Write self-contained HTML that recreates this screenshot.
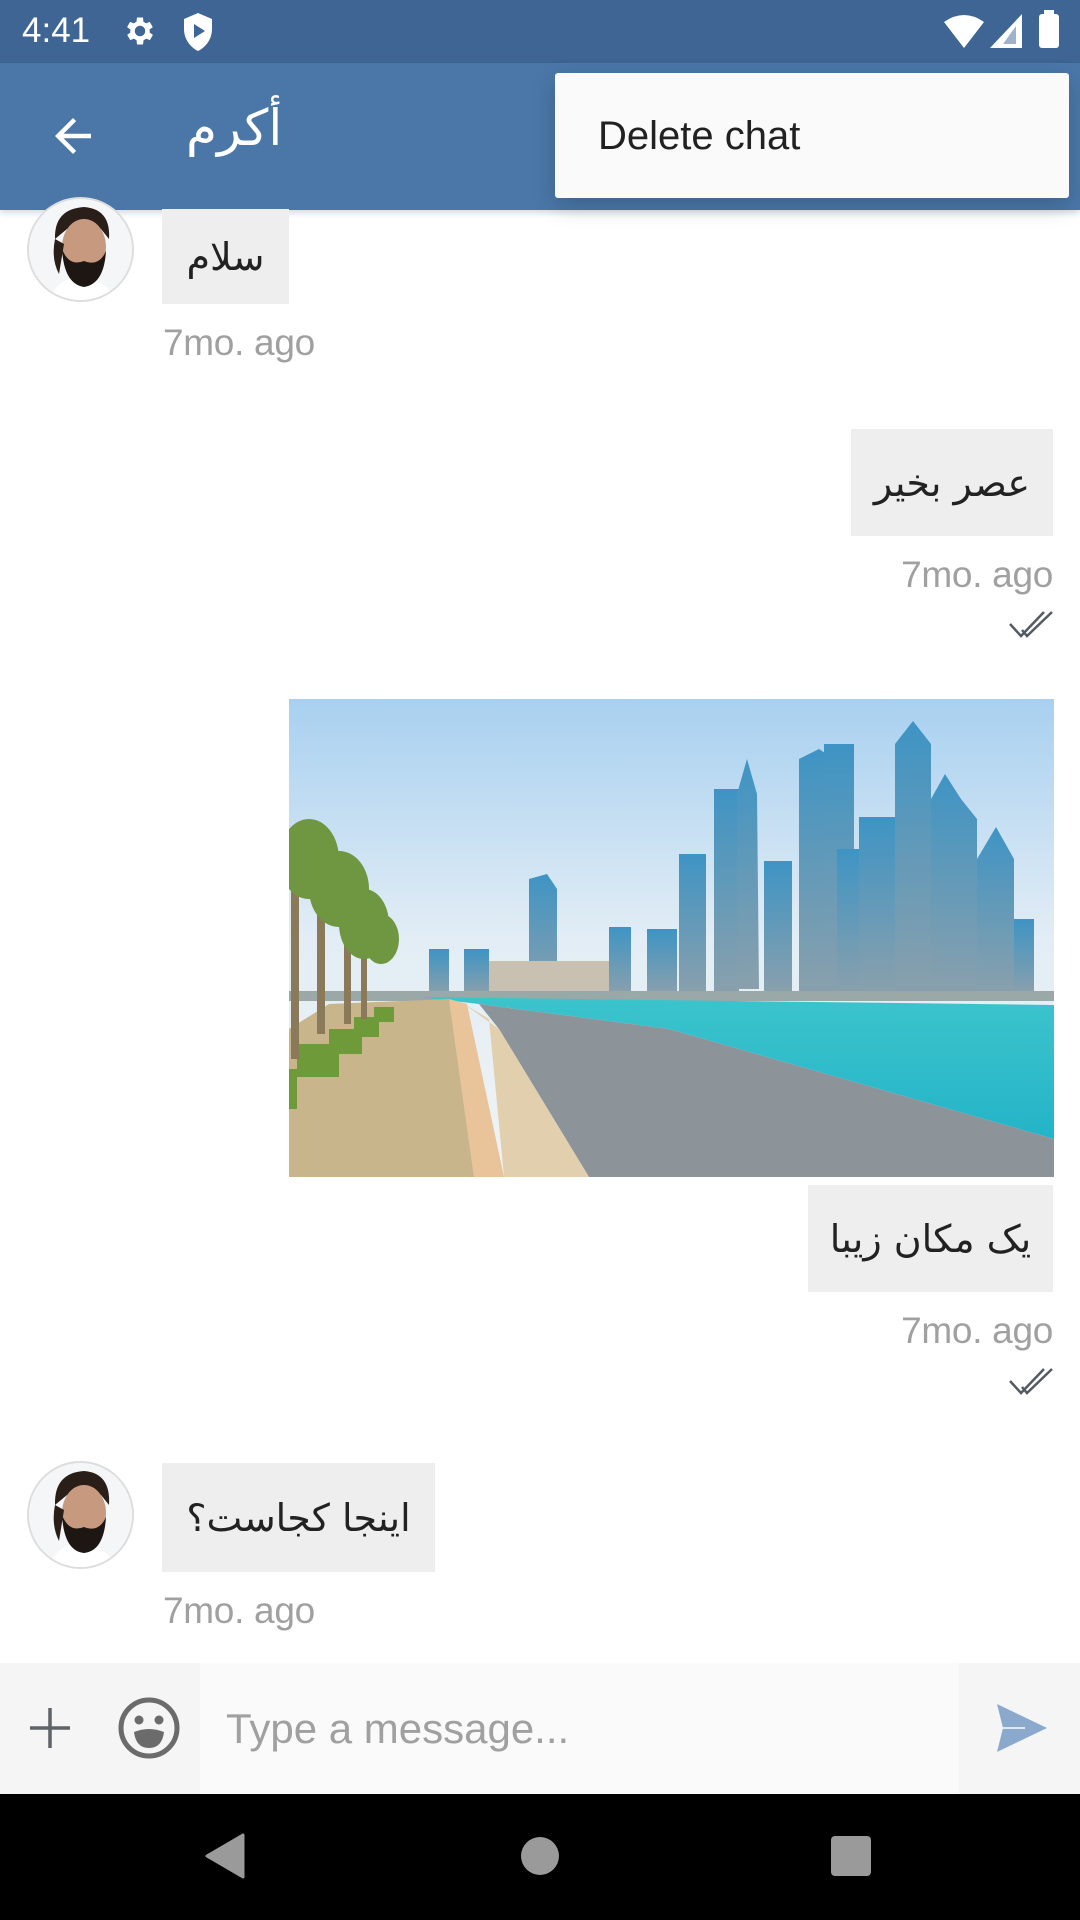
<!DOCTYPE html>
<html><head><meta charset="utf-8"><style>
*{margin:0;padding:0;box-sizing:border-box}
body{width:1080px;height:1920px;position:relative;background:#fff;font-family:"Liberation Sans","Noto Sans CJK SC",sans-serif;overflow:hidden}
.abs{position:absolute}
.bub{position:absolute;background:#eeeeee;color:#222;font-size:38px;display:flex;align-items:center;justify-content:center;font-family:"DejaVu Sans","Noto Sans CJK SC",sans-serif}
.ts{position:absolute;font-size:37px;color:#a0a0a0;font-weight:300;font-family:"Liberation Sans",sans-serif;letter-spacing:-0.3px}
</style></head><body>
<div class="abs" style="left:0;top:0;width:1080px;height:63px;background:#3f6595"></div>
<div class="abs" style="left:22px;top:11px;color:#fff;font-size:35px">4:41</div>
<svg class="abs" style="left:122px;top:13px" width="36" height="36" viewBox="0 0 24 24"><path fill="#fff" d="M19.4 13a7.5 7.5 0 0 0 0-2l2.1-1.6-2-3.5-2.5 1a7 7 0 0 0-1.7-1L15 3h-4l-.4 2.9a7 7 0 0 0-1.7 1l-2.5-1-2 3.5L6.6 11a7.5 7.5 0 0 0 0 2l-2.1 1.6 2 3.5 2.5-1a7 7 0 0 0 1.7 1L11 21h4l.4-2.9a7 7 0 0 0 1.7-1l2.5 1 2-3.5zM13 15.5a3.5 3.5 0 1 1 0-7 3.5 3.5 0 0 1 0 7z" transform="translate(-1 0)"/></svg>
<svg class="abs" style="left:182px;top:13px" width="32" height="38" viewBox="0 0 16 19"><path fill="#fff" d="M8 0L1 3v5c0 5 3 9 7 11 4-2 7-6 7-11V3z"/><path fill="#3f6595" d="M6 5.5v7l5.5-3.5z"/></svg>
<svg class="abs" style="left:944px;top:14px" width="40" height="34" viewBox="0 0 40 34"><path fill="#fff" d="M0 8Q20-6 40 8L20 34z"/></svg>
<svg class="abs" style="left:990px;top:14px" width="32" height="34" viewBox="0 0 32 34"><path fill="#fff" d="M32 0V34H0z"/><path fill="#3f6595" d="M26 12V30H13z" opacity=".5"/></svg>
<div class="abs" style="left:1039px;top:14px;width:20px;height:34px;background:#fff;border-radius:3px"></div>
<div class="abs" style="left:1044px;top:10px;width:10px;height:5px;background:#fff"></div>

<div class="abs" style="left:0;top:63px;width:1080px;height:147px;background:#4a77a8;box-shadow:0 3px 6px rgba(0,0,0,.15)"></div>
<svg class="abs" style="left:46px;top:109px" width="54" height="54" viewBox="0 0 24 24"><path fill="#fff" d="M20 11H7.8l5.6-5.6L12 4l-8 8 8 8 1.4-1.4L7.8 13H20z"/></svg>
<div class="abs" style="left:186px;top:99px;color:#fff;font-size:50px;font-family:'DejaVu Sans',sans-serif">أكرم</div>

<div class="abs" style="left:555px;top:73px;width:514px;height:125px;background:#fafafa;border-radius:3px;box-shadow:0 8px 24px rgba(0,0,0,.18)"></div>
<div class="abs" style="left:598px;top:114px;font-size:40px;color:#212121">Delete chat</div>

<!-- message 1 -->
<div class="abs" style="left:27px;top:197px;width:107px;height:105px;border-radius:50%;overflow:hidden;border:2px solid #ddd;background:#fafafa">
<svg width="107" height="105" viewBox="0 0 107 105"><rect width="107" height="105" fill="#f4f6f8"/><path d="M20 105Q25 80 50 78Q80 80 88 105z" fill="#fff"/><path d="M26 40Q25 10 55 8Q82 10 80 40L72 30Q55 20 38 30Z" fill="#2a1f18"/><ellipse cx="55" cy="48" rx="22" ry="28" fill="#c79a80"/><path d="M33 50Q35 85 55 88Q75 85 77 52Q70 68 55 62Q40 68 33 50z" fill="#1e1612"/><path d="M26 40Q22 60 30 75L35 45z" fill="#2a1f18"/></svg></div>
<div class="bub" style="left:162px;top:209px;width:127px;height:95px">سلام</div>
<div class="ts" style="left:163px;top:322px">7mo. ago</div>

<!-- message 2 -->
<div class="bub" style="left:851px;top:429px;width:202px;height:107px">عصر بخير</div>
<div class="ts" style="right:27px;top:554px">7mo. ago</div>
<svg class="abs" style="left:1008px;top:610px" width="46" height="30" viewBox="0 0 46 30"><path d="M2 14L13 26L36 2M14 20L19 26L44 2" fill="none" stroke="#555b63" stroke-width="2.5"/></svg>

<!-- image -->
<svg class="abs" style="left:289px;top:699px" width="765" height="478" viewBox="0 0 765 478" preserveAspectRatio="none">
<defs><linearGradient id="sky" x1="0" y1="0" x2="0" y2="1"><stop offset="0" stop-color="#a8d0f0"/><stop offset=".5" stop-color="#e2edf5"/><stop offset="1" stop-color="#f0f3f4"/></linearGradient>
<linearGradient id="sea" x1="0" y1="0" x2="0" y2="1"><stop offset="0" stop-color="#3cc4cc"/><stop offset="1" stop-color="#24b4c8"/></linearGradient>
<linearGradient id="bld" x1="0" y1="0" x2="0" y2="1"><stop offset="0" stop-color="#3e94c4"/><stop offset="1" stop-color="#8aa0ac"/></linearGradient></defs>
<rect width="765" height="478" fill="url(#sky)"/>
<g fill="url(#bld)">
<polygon points="240,180 258,175 268,190 268,295 240,295"/><rect x="320" y="228" width="22" height="67"/><rect x="358" y="230" width="30" height="65"/>
<rect x="390" y="155" width="27" height="140"/><rect x="425" y="90" width="25" height="205"/><polygon points="448,95 458,60 468,95 470,290 448,290"/>
<rect x="475" y="162" width="28" height="133"/><polygon points="510,60 530,50 545,60 545,295 510,295"/><rect x="535" y="45" width="30" height="250"/>
<rect x="548" y="150" width="32" height="145"/><rect x="570" y="118" width="36" height="177"/><polygon points="606,45 624,22 642,45 642,295 606,295"/>
<polygon points="642,100 656,75 672,100 688,120 688,295 642,295"/><polygon points="688,160 707,128 725,160 725,295 688,295"/><rect x="725" y="220" width="20" height="75"/>
<rect x="140" y="250" width="20" height="45"/><rect x="175" y="250" width="25" height="45"/><rect x="200" y="262" width="120" height="33" fill="#c8c0b0"/>
</g>
<rect x="0" y="292" width="765" height="10" fill="#9aa8a8"/>
<polygon points="130,298 765,306 765,440 380,330 190,305" fill="url(#sea)"/>
<polygon points="190,305 380,330 765,440 765,478 300,478 210,330" fill="#8c949a"/>
<polygon points="175,305 210,330 300,478 215,478 200,320" fill="#e2cfae"/>
<polygon points="160,300 178,305 215,478 185,478" fill="#e9c39a"/>
<polygon points="40,305 160,300 185,478 0,478 0,330" fill="#c8b58c"/>
<g fill="#6e9a3a"><rect x="8" y="345" width="42" height="33"/><rect x="40" y="330" width="33" height="25"/><rect x="65" y="318" width="25" height="20"/><rect x="85" y="308" width="20" height="15"/><rect x="0" y="370" width="8" height="40"/></g>
<g fill="#8a7a5a"><rect x="2" y="140" width="8" height="220"/><rect x="28" y="160" width="8" height="175"/><rect x="55" y="200" width="7" height="125"/><rect x="72" y="220" width="6" height="100"/></g>
<g fill="#6f9640"><ellipse cx="20" cy="160" rx="30" ry="40"/><ellipse cx="50" cy="190" rx="30" ry="38"/><ellipse cx="75" cy="225" rx="25" ry="35"/><ellipse cx="92" cy="240" rx="18" ry="25"/></g>
</svg>

<!-- message 3 -->
<div class="bub" style="left:808px;top:1185px;width:245px;height:107px">یک مکان زیبا</div>
<div class="ts" style="right:27px;top:1310px">7mo. ago</div>
<svg class="abs" style="left:1008px;top:1367px" width="46" height="30" viewBox="0 0 46 30"><path d="M2 14L13 26L36 2M14 20L19 26L44 2" fill="none" stroke="#555b63" stroke-width="2.5"/></svg>

<!-- message 4 -->
<div class="abs" style="left:27px;top:1461px;width:107px;height:108px;border-radius:50%;overflow:hidden;border:2px solid #ddd;background:#fafafa">
<svg width="107" height="108" viewBox="0 0 107 108"><rect width="107" height="108" fill="#f4f6f8"/><path d="M20 108Q25 82 50 80Q80 82 88 108z" fill="#fff"/><path d="M26 42Q25 10 55 8Q82 10 80 42L72 32Q55 22 38 32Z" fill="#2a1f18"/><ellipse cx="55" cy="50" rx="22" ry="28" fill="#c79a80"/><path d="M33 52Q35 88 55 90Q75 88 77 54Q70 70 55 64Q40 70 33 52z" fill="#1e1612"/><path d="M26 42Q22 62 30 78L35 47z" fill="#2a1f18"/></svg></div>
<div class="bub" style="left:162px;top:1463px;width:273px;height:109px">اینجا کجاست؟</div>
<div class="ts" style="left:163px;top:1590px">7mo. ago</div>

<!-- input bar -->
<div class="abs" style="left:0;top:1663px;width:1080px;height:131px;background:#f5f5f5"></div>
<div class="abs" style="left:200px;top:1663px;width:759px;height:131px;background:#fafafa"></div>
<svg class="abs" style="left:28px;top:1706px" width="44" height="44" viewBox="0 0 44 44"><path d="M22 2V42M2 22H42" stroke="#5f6368" stroke-width="3.5"/></svg>
<svg class="abs" style="left:117px;top:1696px" width="64" height="64" viewBox="0 0 64 64"><circle cx="32" cy="32" r="28" fill="none" stroke="#6b6b6b" stroke-width="5"/><circle cx="22" cy="24" r="4.5" fill="#6b6b6b"/><circle cx="42" cy="24" r="4.5" fill="#6b6b6b"/><path d="M17 36Q32 30 47 36Q45 52 32 52Q19 52 17 36z" fill="#6b6b6b"/></svg>
<div class="abs" style="left:226px;top:1705px;font-size:42px;color:#a0a0a0">Type a message...</div>
<svg class="abs" style="left:995px;top:1702px" width="54" height="52" viewBox="0 0 54 52"><path d="M2 2L52 26L2 50L8 26z" fill="#8aa9cc"/><path d="M8 26H30" stroke="#dfe8f2" stroke-width="2"/></svg>

<!-- nav bar -->
<div class="abs" style="left:0;top:1794px;width:1080px;height:126px;background:#000"></div>
<svg class="abs" style="left:205px;top:1833px" width="40" height="46" viewBox="0 0 40 46"><path d="M38 2V44L2 23z" fill="#9a9a9a" stroke="#9a9a9a" stroke-width="3" stroke-linejoin="round"/></svg>
<div class="abs" style="left:521px;top:1837px;width:38px;height:38px;border-radius:50%;background:#9a9a9a"></div>
<div class="abs" style="left:831px;top:1836px;width:40px;height:40px;border-radius:4px;background:#9a9a9a"></div>
</body></html>
